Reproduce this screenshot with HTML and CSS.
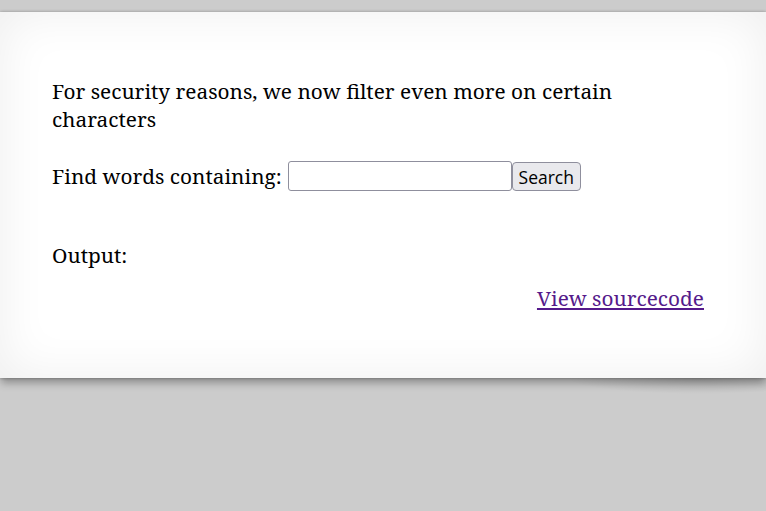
FILE: index.html
```html
<!DOCTYPE html>
<html>
<head>
<meta charset="utf-8">
<title>natas</title>
<link rel="stylesheet" href="styles.css">
</head>
<body>
<div class="content">
  <p class="intro">For security reasons, we now filter even more on certain characters</p>
  <form class="search-form">
    <label class="search-label">Find words containing:</label>
    <input class="needle" type="text" name="needle"><button class="search-btn" type="button">Search</button>
  </form>
  <p class="output">Output:</p>
  <div class="viewsource"><a href="#">View sourcecode</a></div>
</div>
</body>
</html>
```
FILE: styles.css
```css
html, body {
  margin: 0;
  padding: 0;
}
html {
  background: #cccccc;
  height: 100%;
}
body {
  box-sizing: border-box;
  min-height: 100%;
  padding-top: 12px;
  font-family: "Noto Serif", "DejaVu Serif", serif;
  font-size: 20.8px;
  line-height: 28px;
  color: #000;
}
.content {
  position: relative;
  background: #ffffff;
  padding: 65px 62px 66px 52px;
  box-shadow: inset 0 0 50px rgba(0, 0, 0, 0.07), 0 0 3px rgba(0, 0, 0, 0.3), 0 6px 8px -1px rgba(0, 0, 0, 0.3);
}
.content::after {
  content: "";
  position: absolute;
  right: 0;
  bottom: -16px;
  width: 240px;
  height: 16px;
  background: radial-gradient(ellipse 55% 100% at 72% 0%, rgba(0, 0, 0, 0.14), rgba(0, 0, 0, 0) 100%);
  pointer-events: none;
}
.intro {
  margin: 0 0 28px 0;
}
.search-form {
  margin: 0;
  display: flex;
  align-items: center;
  height: 30px;
}
.search-label {
  margin-right: 6px;
}
.needle {
  box-sizing: border-box;
  width: 224px;
  height: 30px;
  margin: 0;
  border: 1px solid #8f8f9d;
  border-radius: 3px;
  background: #fff;
  padding: 2px 4px;
}
.search-btn {
  box-sizing: border-box;
  width: 69px;
  height: 29px;
  margin: 1px 0 0 0;
  border: 1px solid #8f8f9d;
  border-radius: 4px;
  background: #e9e9ed;
  font-family: "Open Sans", "Noto Sans", sans-serif;
  font-size: 17.5px;
  color: #000;
  padding: 0;
}
.output {
  margin: 50px 0 0 0;
}
.viewsource {
  text-align: right;
  margin-top: 15px;
}
.viewsource a {
  color: #551a8b;
}
```
